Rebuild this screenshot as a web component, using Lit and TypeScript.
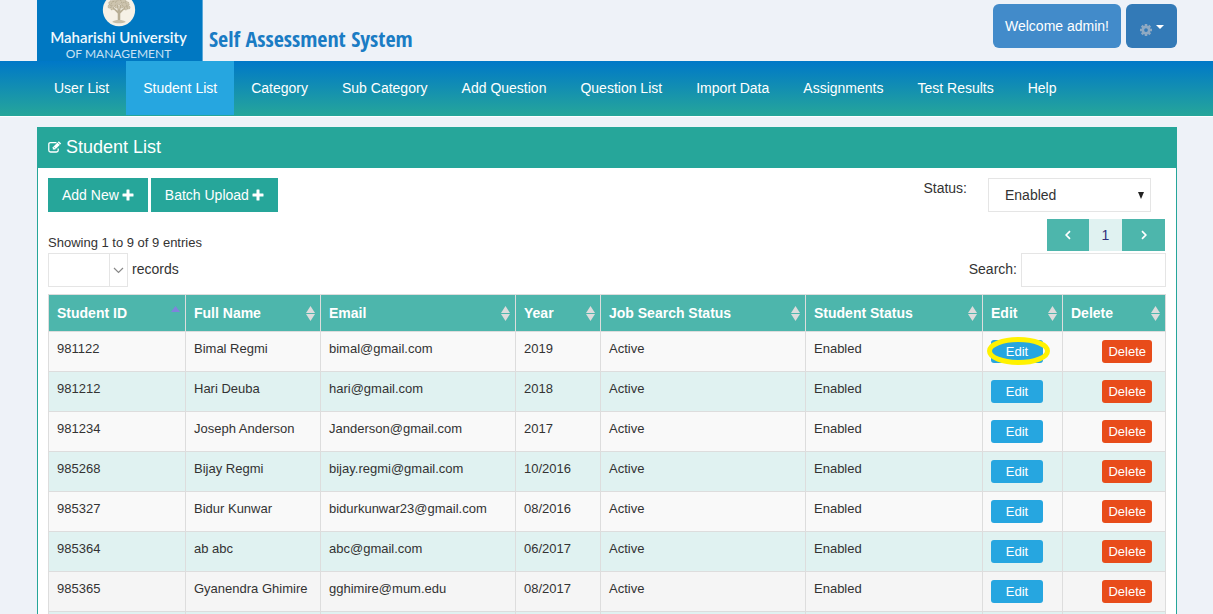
import { LitElement, html, svg, css, nothing } from "lit";
import { customElement, state } from "lit/decorators.js";
import { classMap } from "lit/directives/class-map.js";

interface Student {
  id: string;
  name: string;
  email: string;
  year: string;
}

const NAV = [
  "User List",
  "Student List",
  "Category",
  "Sub Category",
  "Add Question",
  "Question List",
  "Import Data",
  "Assignments",
  "Test Results",
  "Help",
];

const COLUMNS = [
  { title: "Student ID", cls: "c-id" },
  { title: "Full Name", cls: "c-name" },
  { title: "Email", cls: "c-email" },
  { title: "Year", cls: "c-year" },
  { title: "Job Search Status", cls: "c-job" },
  { title: "Student Status", cls: "c-status" },
  { title: "Edit", cls: "c-edit" },
  { title: "Delete", cls: "c-delete" },
];

const STUDENTS: Student[] = [
  { id: "981122", name: "Bimal Regmi", email: "bimal@gmail.com", year: "2019" },
  { id: "981212", name: "Hari Deuba", email: "hari@gmail.com", year: "2018" },
  { id: "981234", name: "Joseph Anderson", email: "Janderson@gmail.com", year: "2017" },
  { id: "985268", name: "Bijay Regmi", email: "bijay.regmi@gmail.com", year: "10/2016" },
  { id: "985327", name: "Bidur Kunwar", email: "bidurkunwar23@gmail.com", year: "08/2016" },
  { id: "985364", name: "ab abc", email: "abc@gmail.com", year: "06/2017" },
  { id: "985365", name: "Gyanendra Ghimire", email: "gghimire@mum.edu", year: "08/2017" },
];

const plusIcon = html`<svg class="plus" viewBox="0 0 12 12" aria-hidden="true">
  <path d="M5 .5h2q.5 0 .5.500v3.500H11q.5 0 .5.500v2q0 .5-.5.500H7.500V11q0 .5-.5.500H5q-.5 0-.5-.5V7.500H1Q.5 7.500.5 7V5q0-.5.500-.5h3.500V1q0-.5.500-.5z" fill="currentColor" />
</svg>`;

const leaves: Array<[number, number, number]> = [
  [11, 12, 3], [15, 8, 3], [20, 6, 3], [25, 9, 3], [29, 13, 3],
  [9, 16, 2], [31, 17, 2], [14, 13, 3], [20, 11, 3], [26, 14, 3],
  [12, 18, 2], [28, 18, 2], [17, 16, 2], [23, 16, 2],
];

@customElement("app-root")
export class AppRoot extends LitElement {
  @state() private active = "Student List";

  static styles = css`
    :host {
      display: block;
      min-height: 100vh;
      background: #eef2f8;
      color: #333;
      font: 14px/20px "Liberation Sans", Arial, sans-serif;
    }
    * { box-sizing: border-box; }
    button, select, input { font: inherit; color: inherit; margin: 0; border-radius: 0; }
    button { border: 0; cursor: pointer; }
    a { text-decoration: none; }

    .wrap { padding: 0 36px 0 37px; }

    .top { display: flex; justify-content: space-between; align-items: flex-start; }
    .brand { display: flex; height: 61px; gap: 6px; }
    .logo {
      width: 166px;
      padding-right: 2px;
      display: flex;
      flex-direction: column;
      justify-content: flex-end;
      align-items: center;
      overflow: hidden;
      background: #0078c2;
      border-right: 1px solid #5aa9da;
      color: #f1f8fd;
      font-family: Lato, sans-serif;
      text-align: center;
    }
    .tree { width: 34px; height: 34px; flex: none; }
    .uni { font-size: 15px; line-height: 20px; font-weight: 600; white-space: nowrap; }
    .dept { font-size: 12px; line-height: 14px; color: #c8e2f4; white-space: nowrap; }
    .system {
      margin: 0;
      padding-top: 24px;
      font: bold 22px/28px "Open Sans Condensed", "Liberation Sans Narrow", "Liberation Sans", sans-serif;
      color: #1a7cc4;
      white-space: nowrap;
    }
    .account { display: flex; gap: 5px; padding-top: 4px; }
    .account button { height: 44px; border-radius: 6px; color: #fff; }
    .welcome { padding: 0 12px; background: #428bca; }
    .settings {
      width: 51px;
      padding: 8px 0 0;
      display: flex;
      align-items: center;
      justify-content: center;
      gap: 4px;
      background: #337ab7;
    }
    .gear { width: 12px; height: 12px; color: #8fa9c2; }
    .caret { width: 8px; height: 4px; margin-bottom: 6px; }

    nav { background: linear-gradient(#0078c8, #26a69a); border-bottom: 1px solid #fff; padding-bottom: 1px; }
    .tabs { display: flex; list-style: none; margin: 0; }
    .tabs a { display: block; padding: 17px; color: #fff; white-space: nowrap; }
    .tabs a.on { background: #26a6e0; }

    .page { padding-top: 10px; }
    .panel { border: 1px solid #26a69a; background: #fff; }
    .panel-head {
      margin: 0;
      padding: 9px 10px 11px;
      display: flex;
      align-items: center;
      gap: 4px;
      background: #26a69a;
      color: #fff;
      font-size: 18px;
      line-height: 20px;
      font-weight: normal;
    }
    .pen { width: 14px; height: 12px; }
    .panel-body { padding: 10px; }

    .tools { display: flex; justify-content: space-between; align-items: flex-start; }
    .actions { display: flex; gap: 3px; }
    .actions button {
      height: 34px;
      padding: 0 14px;
      display: flex;
      align-items: center;
      gap: 3px;
      background: #26a69a;
      color: #fff;
    }
    .plus { width: 12px; height: 12px; }
    .status { display: flex; gap: 21px; padding-right: 15px; }
    .picker { display: grid; }
    .picker > * { grid-area: 1 / 1; }
    .picker select {
      appearance: none;
      background: #fff;
      border: 1px solid #e5e5e5;
      height: 34px;
      width: 163px;
      padding: 0 16px;
    }
    .picker svg { justify-self: end; align-self: center; pointer-events: none; }
    .solid-arrow { width: 6px; height: 7px; margin-right: 7px; }

    .info { display: flex; justify-content: space-between; align-items: flex-start; padding-top: 7px; }
    .showing { margin: 0; padding-top: 14px; font-size: 13px; }
    .pager { display: flex; padding-right: 1px; }
    .pager button {
      width: 43px;
      height: 32px;
      padding: 0;
      display: flex;
      align-items: center;
      justify-content: center;
      background: #4db6ac;
      color: #fff;
    }
    .pager .prev { width: 42px; }
    .pager .current { width: 33px; background: #e0f2f1; color: #32307a; }
    .pager svg { width: 8px; height: 10px; }

    .filters { display: flex; justify-content: space-between; padding-bottom: 7px; margin-top: -1px; padding-top: 1px; }
    .filters label { display: flex; align-items: flex-start; gap: 4px; line-height: 32px; }
    .filters .picker select { width: 80px; padding: 0 20px 0 8px; }
    .drop { width: 19px; height: 32px; border-left: 1px solid #e5e5e5; }
    .search input { width: 145px; height: 34px; border: 1px solid #e5e5e5; padding: 0 8px; background: #fff; }

    table { width: 100%; border-collapse: collapse; table-layout: fixed; font-size: 13px; line-height: 18px; }
    .c-id { width: 137px; }
    .c-name { width: 135px; }
    .c-email { width: 195px; }
    .c-year { width: 85px; }
    .c-job { width: 205px; }
    .c-status { width: 177px; }
    .c-edit { width: 80px; }
    .c-delete { width: 103px; }
    th {
      height: 37px;
      padding: 0 5px 0 8px;
      border: 1px solid #ddd;
      background: #4db6ac;
      color: #fff;
      font-size: 14px;
      text-align: left;
    }
    .head { display: flex; align-items: center; justify-content: space-between; white-space: nowrap; }
    .sort { width: 9px; height: 15px; flex: none; }
    td { height: 40px; padding: 8px; border: 1px solid #ddd; vertical-align: top; }
    tbody tr { background: #f9f9f9; }
    tbody tr:nth-child(even) { background: #e0f2f1; }
    tbody tr.hover { background: #f5f5f5; }
    .small { display: block; height: 23px; padding: 0 6px; border-radius: 3px; color: #fff; line-height: 23px; }
    .edit { width: 52px; background: #26a6e0; }
    .remove { background: #e84c1a; margin-left: auto; }
    td.del { padding-right: 13px; }
    .marked { position: relative; width: 52px; }
    .ring { position: absolute; left: -4px; top: -3px; width: 63px; height: 28px; pointer-events: none; }
  `;

  private tree() {
    return html`<svg class="tree" viewBox="0 0 40 40" aria-hidden="true">
      <circle cx="20" cy="20" r="19" fill="#f6f1e6" />
      ${leaves.map(([x, y, r]) => svg`<circle cx=${x} cy=${y} r=${r} fill="#cdc4ae" stroke="#a99f86" stroke-width=".7" stroke-dasharray="2 1" />`)}
      <path d="M18.5 34V24l-6-6 1-1 5 4-1-7h1.500l1 6 1-6h1.500l-1 7 5-4 1 1-6 6v10z" fill="#b8ae95" />
      <path d="M12 34c3-3 13-3 16 0-4 2-12 2-16 0z" fill="#c8bfa9" />
    </svg>`;
  }

  private sortIcon(sorted: boolean) {
    return html`<svg class="sort" viewBox="0 0 9 15" aria-hidden="true">
      <path d="M0 ${sorted ? 6 : 7}L4.500 0 9 ${sorted ? 6 : 7}z" fill=${sorted ? "#7f83dc" : "#dcdcdc"} />
      ${sorted ? nothing : svg`<path d="M0 8h9L4.500 15z" fill="#dcdcdc" />`}
    </svg>`;
  }

  private row(s: Student, i: number) {
    const edit = html`<button class="small edit">Edit</button>`;
    return html`<tr class=${classMap({ hover: i === 6 })}>
      <td>${s.id}</td>
      <td>${s.name}</td>
      <td>${s.email}</td>
      <td>${s.year}</td>
      <td>Active</td>
      <td>Enabled</td>
      <td>
        ${i === 0
          ? html`<div class="marked">${edit}
              <svg class="ring" viewBox="0 0 63 28" aria-hidden="true">
                <ellipse cx="31.500" cy="14" rx="29" ry="11.500" fill="none" stroke="#fff200" stroke-width="5" />
              </svg></div>`
          : edit}
      </td>
      <td class="del"><button class="small remove">Delete</button></td>
    </tr>`;
  }

  render() {
    return html`
      <header class="wrap top">
        <div class="brand">
          <div class="logo">
            ${this.tree()}
            <div class="uni">Maharishi University</div>
            <div class="dept">OF MANAGEMENT</div>
          </div>
          <h1 class="system">Self Assessment System</h1>
        </div>
        <div class="account">
          <button class="welcome">Welcome admin!</button>
          <button class="settings" aria-label="Settings">
            <svg class="gear" viewBox="0 0 16 16" aria-hidden="true">
              <g fill="currentColor">
                ${[0, 45, 90, 135].map((a) => svg`<rect x="6.300" y="0" width="3.400" height="4" transform="rotate(${a} 8 8)" /><rect x="6.300" y="12" width="3.400" height="4" transform="rotate(${a} 8 8)" />`)}
              </g>
              <circle cx="8" cy="8" r="4.200" fill="none" stroke="currentColor" stroke-width="3.400" />
            </svg>
            <svg class="caret" viewBox="0 0 8 4" aria-hidden="true"><path d="M0 0h8L4 4z" fill="#fff" /></svg>
          </button>
        </div>
      </header>

      <nav>
        <ul class="wrap tabs">
          ${NAV.map((n) => html`<li><a href="#" class=${classMap({ on: n === this.active })}
            @click=${(e: Event) => { e.preventDefault(); this.active = n; }}>${n}</a></li>`)}
        </ul>
      </nav>

      <main class="wrap page">
        <section class="panel">
          <h2 class="panel-head">
            <svg class="pen" viewBox="0 0 14 12" aria-hidden="true">
              <path d="M8.500 1.600H2.500Q.8 1.600.8 3.300v6Q.8 11 2.500 11h6q1.700 0 1.700-1.700V7.500" fill="none" stroke="currentColor" stroke-width="1.300" />
              <path d="M4.800 6.200 10.800.2l2.400 2.400-6 6H4.800z" fill="currentColor" />
              <path d="M9.600 1.400 12 3.800M6 6.200l1.200 1.200" stroke="#26a69a" stroke-width=".8" />
            </svg>
            Student List
          </h2>
          <div class="panel-body">
            <div class="tools">
              <div class="actions">
                <button>Add New ${plusIcon}</button>
                <button>Batch Upload ${plusIcon}</button>
              </div>
              <div class="status">
                <label for="status">Status:</label>
                <div class="picker">
                  <select id="status"><option>Enabled</option></select>
                  <svg class="solid-arrow" viewBox="0 0 6 7" aria-hidden="true"><path d="M0 0h6L3 7z" fill="#222" /></svg>
                </div>
              </div>
            </div>

            <div class="info">
              <p class="showing">Showing 1 to 9 of 9 entries</p>
              <div class="pager">
                <button class="prev" aria-label="Previous"><svg viewBox="0 0 8 10"><path d="M6 1.200 2.200 5 6 8.800" fill="none" stroke="currentColor" stroke-width="1.700" /></svg></button>
                <button class="current">1</button>
                <button aria-label="Next"><svg viewBox="0 0 8 10"><path d="M2 1.200 5.800 5 2 8.800" fill="none" stroke="currentColor" stroke-width="1.700" /></svg></button>
              </div>
            </div>

            <div class="filters">
              <label>
                <span class="picker">
                  <select aria-label="records"><option></option></select>
                  <svg class="drop" viewBox="0 0 18 32" aria-hidden="true"><path d="M4 14l4.500 4.500L13 14" fill="none" stroke="#888" stroke-width="1.200" /></svg>
                </span>
                records
              </label>
              <label class="search">Search: <input type="text" /></label>
            </div>

            <table>
              <colgroup>${COLUMNS.map((c) => html`<col class=${c.cls} />`)}</colgroup>
              <thead>
                <tr>
                  ${COLUMNS.map((c, i) => html`<th scope="col"><div class="head">${c.title}${this.sortIcon(i === 0)}</div></th>`)}
                </tr>
              </thead>
              <tbody>
                ${STUDENTS.map((s, i) => this.row(s, i))}
                <tr>${COLUMNS.map(() => html`<td></td>`)}</tr>
              </tbody>
            </table>
          </div>
        </section>
      </main>
    `;
  }
}
